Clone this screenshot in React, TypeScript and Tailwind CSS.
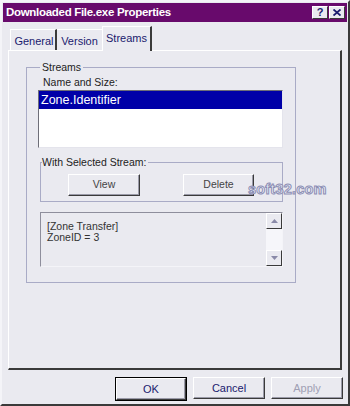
import React from "react";

function Btn({ label, className = "", text = "text-[#1a1a6e]" }: { label: string; className?: string; text?: string }) {
  return (
    <div
      className={`h-[22px] flex items-center justify-center border border-t-white border-l-white border-r-[#3a3a3a] border-b-[#3a3a3a] shadow-[inset_-1px_-1px_0_#9a9aa8] ${text} ${className}`}
    >
      {label}
    </div>
  );
}

function ScrollArrow({ up }: { up?: boolean }) {
  return (
    <div className="w-[16px] h-[16px] flex items-center justify-center border border-t-white border-l-white border-r-[#3a3a3a] border-b-[#3a3a3a] bg-[#eaeaf0]">
      <svg width="7" height="4" viewBox="0 0 7 4">
        <path d={up ? "M0 4 L3.5 0 L7 4 Z" : "M0 0 L3.5 4 L7 0 Z"} fill="#8a8aa8" />
      </svg>
    </div>
  );
}

export default function App() {
  return (
    <div className="w-[350px] h-[406px] bg-[#eaeaf0] flex flex-col border-2 border-t-[#f4f4f8] border-l-[#f4f4f8] border-r-[#3a3a3a] border-b-[#3a3a3a] font-['Liberation_Sans',Arial,sans-serif] text-[10.5px] text-[#222] relative overflow-hidden">
      {/* Title bar */}
      <div className="h-[19px] mx-[1px] mt-[1px] bg-[#680a6c] flex items-center pl-[3px] pr-[2px]">
        <span className="text-white font-bold text-[11.5px] tracking-[-0.3px] flex-1">Downloaded File.exe Properties</span>
        <div className="flex gap-[1px]">
          <div className="w-[16px] h-[13px] bg-[#eaeaf0] border border-t-white border-l-white border-r-[#3a3a3a] border-b-[#3a3a3a] flex items-center justify-center text-[#1a1a6e] font-bold text-[11px] leading-none">?</div>
          <div className="w-[16px] h-[13px] bg-[#eaeaf0] border border-t-white border-l-white border-r-[#3a3a3a] border-b-[#3a3a3a] flex items-center justify-center">
            <svg width="8" height="7" viewBox="0 0 8 7">
              <path d="M0.5 0.5 L7.5 6.5 M7.5 0.5 L0.5 6.5" stroke="#1a1a6e" strokeWidth="1.8" />
            </svg>
          </div>
        </div>
      </div>

      {/* Tabs */}
      <div className="flex items-end h-[24px] mt-[4px] ml-[8px] relative z-10 text-[11px]">
        <div className="h-[21px] w-[47px] flex items-center justify-center border-t border-l border-t-white border-l-white border-r-2 border-r-[#3a3a3a] text-[#1a1a6e] pt-[2px] pl-[2px]">General</div>
        <div className="h-[21px] w-[45px] flex items-center justify-center border-t border-t-white text-[#1a1a6e] pt-[2px]">Version</div>
        <div className="h-[25px] w-[50px] -mb-[1px] bg-[#eaeaf0] flex items-center justify-center border-t border-l border-t-white border-l-white border-r-2 border-r-[#3a3a3a] text-[#1a1a6e] pb-[2px]">Streams</div>
      </div>

      {/* Tab panel */}
      <div className="mx-[6px] h-[320px] border border-t-white border-l-white border-r-2 border-b-2 border-r-[#3a3a3a] border-b-[#3a3a3a] pt-[9px] pl-[17px]">
        <fieldset className="w-[270px] h-[223px] border border-[#a9abc6] px-[11px]">
          <legend className="ml-[2px] px-[2px] leading-[14px]">Streams</legend>
          <div className="pl-[5px] mt-[2px] leading-[12px]">Name and Size:</div>
          <div className="mt-[2px] w-[245px] h-[58px] bg-white border border-t-[#6e6e78] border-l-[#6e6e78] border-r-[#e4e4ec] border-b-[#e4e4ec]">
            <div className="h-[18px] bg-[#0000a8] text-white text-[12.5px] leading-[18px] pl-[2px]">Zone.Identifier</div>
          </div>

          <fieldset className="mt-[7px] ml-[2px] w-[243px] h-[47px] border border-[#a9abc6] flex">
            <legend className="ml-[1px] pr-[2px] leading-[14px]">With Selected Stream:</legend>
            <div className="flex items-start pt-[5px] pl-[27px] gap-[43px]">
              <Btn label="View" className="w-[72px]" text="text-[#444]" />
              <Btn label="Delete" className="w-[71px]" text="text-[#444]" />
            </div>
          </fieldset>

          <div className="mt-[10px] ml-[2px] w-[243px] h-[55px] border border-t-[#8e8e9c] border-l-[#8e8e9c] border-r-[#f4f4f8] border-b-[#f4f4f8] flex">
            <div className="flex-1 pl-[6px] pt-[8px] leading-[11px] text-[#333]">
              <div>[Zone Transfer]</div>
              <div>ZoneID = 3</div>
            </div>
            <div className="w-[16px] flex flex-col bg-[#f6f6fa]">
              <ScrollArrow up />
              <div className="flex-1" />
              <ScrollArrow />
            </div>
          </div>
        </fieldset>
      </div>

      {/* Bottom buttons */}
      <div className="flex gap-[6px] pl-[113px] mt-[7px] text-[11px]">
        <div className="border border-black">
          <Btn label="OK" className="w-[70px] h-[20px]" />
        </div>
        <Btn label="Cancel" className="w-[72px]" />
        <Btn label="Apply" className="w-[72px]" text="text-[#a0a0b4]" />
      </div>

      {/* Watermark */}
      <div className="absolute left-[246px] top-[177px] text-[14.5px] font-bold text-[#eef0f8] [-webkit-text-stroke:1px_#8c8eb4] tracking-[0.2px]">soft32.com</div>
    </div>
  );
}
